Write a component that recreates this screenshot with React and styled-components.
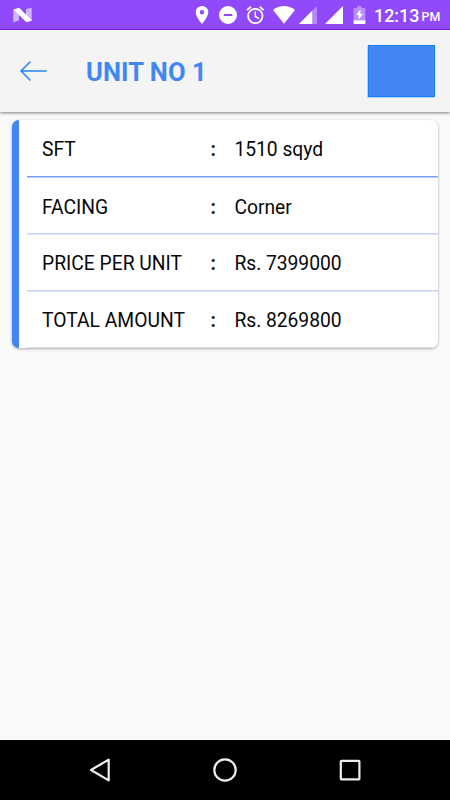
import React from "react";
import styled, { createGlobalStyle } from "styled-components";

const GlobalStyle = createGlobalStyle`
  * { box-sizing: border-box; }
  body { margin: 0; background: #fafafa; font-family: Roboto, "Liberation Sans", sans-serif; }
`;

const Screen = styled.div`
  display: flex;
  flex-direction: column;
  width: 450px;
  height: 800px;
  overflow: hidden;
  background: #fafafa;
`;

const StatusBar = styled.div`
  display: flex;
  flex: none;
  justify-content: space-between;
  height: 30px;
  background: #9049fb;
  border-bottom: 1px solid #7e1ff0;
`;

const StatusIcons = styled.div`
  display: flex;
`;

const StatusIcon = styled.svg`
  display: block;
  flex: none;
  width: ${(p) => p.$width}px;
  height: 29px;
  margin-left: ${(p) => p.$gap}px;
  fill: #fff;
`;

const Clock = styled.div`
  display: flex;
  width: 76px;
  margin-left: 8px;
  color: #fff;
  font-weight: 500;
  white-space: nowrap;
`;

const ClockTime = styled.span`
  width: 47.5px;
  font-size: 17.9px;
  line-height: 32px;
`;

const Meridiem = styled.span`
  font-size: 12.4px;
  line-height: 34px;
`;

const Header = styled.header`
  display: flex;
  flex: none;
  align-items: center;
  height: 82px;
  padding: 0 15px 0 19px;
  background: #f4f4f4;
  box-shadow: 0 1px 3px rgba(0, 0, 0, 0.5);
`;

const BackButton = styled.button`
  display: flex;
  width: 29px;
  padding: 0;
  border: 0;
  background: none;
`;

const Title = styled.h1`
  flex: 1;
  margin: 2px 0 0 38px;
  color: #4285f4;
  font-size: 25.5px;
  font-weight: 700;
  line-height: 30px;
  letter-spacing: 0.1px;
`;

const HeaderBlock = styled.div`
  width: 67px;
  height: 52px;
  border: 1px solid #1580fb;
  background: #4386f4;
  box-shadow: -1px 1px 0 #b9d2f9;
`;

const Content = styled.main`
  flex: 1;
  padding: 8px 12px;
`;

const Card = styled.section`
  height: 228px;
  padding-left: 8px;
  overflow: hidden;
  border-left: 7px solid #3f87f5;
  border-radius: 7px;
  background: #fff;
  box-shadow: 0 1px 3px rgba(0, 0, 0, 0.32);
`;

const Row = styled.div`
  display: grid;
  grid-template-columns: 168.5px 24px 1fr;
  height: ${(p) => p.$height}px;
  padding-left: 15px;
  border-bottom: ${(p) => (p.$line ? `1px solid ${p.$line}` : "0")};
  box-shadow: ${(p) => (p.$edge ? `inset 0 -1px ${p.$edge}` : "none")};
  color: #080808;
  font-size: 19.3px;
  line-height: ${(p) => p.$lead}px;
  white-space: nowrap;
`;

const Label = styled.span``;

const Colon = styled.span`
  font-weight: 700;
`;

const Value = styled.span`
  letter-spacing: -0.05px;
`;

const NavBar = styled.nav`
  display: flex;
  flex: none;
  align-items: center;
  justify-content: center;
  gap: 95px;
  height: 60px;
  background: #000;
`;

const NavIcon = styled.svg`
  display: block;
  width: 30px;
  height: 30px;
  fill: none;
  stroke: #eee;
  stroke-width: 2.2;
  stroke-linejoin: round;
`;

const rows = [
  { label: "SFT", value: "1510 sqyd", height: 58, lead: 60, line: "#bccefa", edge: "#7a9cf6" },
  { label: "FACING", value: "Corner", height: 57, lead: 59, line: "#dde5fd", edge: "#c4d2fb" },
  { label: "PRICE PER UNIT", value: "Rs. 7399000", height: 57, lead: 57, line: "#dde5fd", edge: "#c9d5fb" },
  { label: "TOTAL AMOUNT", value: "Rs. 8269800", height: 56, lead: 57, edge: "#dedede" },
];

export default function App() {
  return (
    <Screen>
      <GlobalStyle />
      <StatusBar>
        <StatusIcon $width={20} $gap={13} viewBox="0 0 20 29">
          <path d="M.3 9.2 6 12v8.6L.3 22.2zM13 8.9l5.7-1.2v13.2L13 18z" opacity=".6" />
          <path d="M.6 9.4 6.2 7.7 18.8 20.5 13.4 22.3z" />
        </StatusIcon>
        <StatusIcons>
          <StatusIcon $width={14} $gap={0} viewBox="0 0 14 29">
            <path fillRule="evenodd" d="M7 6a6.3 6.3 0 0 0-6.3 6.3C.7 17 7 24 7 24s6.3-7 6.3-11.7A6.3 6.3 0 0 0 7 6zm0 4.1a2.2 2.2 0 1 1 0 4.4 2.2 2.2 0 0 1 0-4.4z" />
          </StatusIcon>
          <StatusIcon $width={18} $gap={10} viewBox="0 0 18 29">
            <path fillRule="evenodd" d="M9 6a9 9 0 1 0 0 18A9 9 0 0 0 9 6zM4.7 14h8.6v2H4.7z" />
          </StatusIcon>
          <StatusIcon $width={20} $gap={9} viewBox="0 0 20 29">
            <g fill="none" stroke="#fff" strokeWidth="1.8">
              <circle cx="9.3" cy="16" r="7.2" />
              <path d="M.9 10.1 4.9 6.8M13.7 6.8l4 3.3" />
              <path d="M9.3 11.5v5l3.7 2.2" strokeWidth="1.5" />
            </g>
          </StatusIcon>
          <StatusIcon $width={22} $gap={7} viewBox="0 0 22 29">
            <path d="M0 10C6.5 4.7 15.5 4.7 22 10L11 23.8z" />
          </StatusIcon>
          <StatusIcon $width={18} $gap={4} viewBox="0 0 18 29">
            <path d="M0 24 18 6v18z" opacity=".35" />
            <path d="M0 24 13.2 10.8V24z" />
          </StatusIcon>
          <StatusIcon $width={18} $gap={8} viewBox="0 0 18 29">
            <path d="M0 24 18 6v18z" />
          </StatusIcon>
          <StatusIcon $width={13} $gap={10} viewBox="0 0 13 29">
            <path d="M4.2 6h4.2v2h3q1 0 1 1v11H.5V9q0-1 1-1h2.7z" opacity=".38" />
            <path d="M7.5 9.2 3.2 15h2.5v4.6L9.9 14H7.4z" />
            <path d="M.5 20.2h12V23q0 1-1 1h-10q-1 0-1-1z" />
          </StatusIcon>
          <Clock>
            <ClockTime>12:13</ClockTime>
            <Meridiem>PM</Meridiem>
          </Clock>
        </StatusIcons>
      </StatusBar>
      <Header>
        <BackButton aria-label="Back">
          <svg width="29" height="22" viewBox="0 0 29 22" fill="none" stroke="#2684fc" strokeWidth="1.5" strokeLinecap="round">
            <path d="M11 2 2 11l9 9M2 11h25" />
          </svg>
        </BackButton>
        <Title>UNIT NO 1</Title>
        <HeaderBlock />
      </Header>
      <Content>
        <Card>
          {rows.map((row) => (
            <Row key={row.label} $height={row.height} $lead={row.lead} $line={row.line} $edge={row.edge}>
              <Label>{row.label}</Label>
              <Colon>:</Colon>
              <Value>{row.value}</Value>
            </Row>
          ))}
        </Card>
      </Content>
      <NavBar>
        <NavIcon viewBox="0 0 30 30">
          <path d="M6 15 23.7 4.6v20.8z" />
        </NavIcon>
        <NavIcon viewBox="0 0 30 30">
          <circle cx="15" cy="15" r="10.7" />
        </NavIcon>
        <NavIcon viewBox="0 0 30 30">
          <rect x="5.8" y="5.8" width="18.6" height="18.6" rx=".6" />
        </NavIcon>
      </NavBar>
    </Screen>
  );
}
